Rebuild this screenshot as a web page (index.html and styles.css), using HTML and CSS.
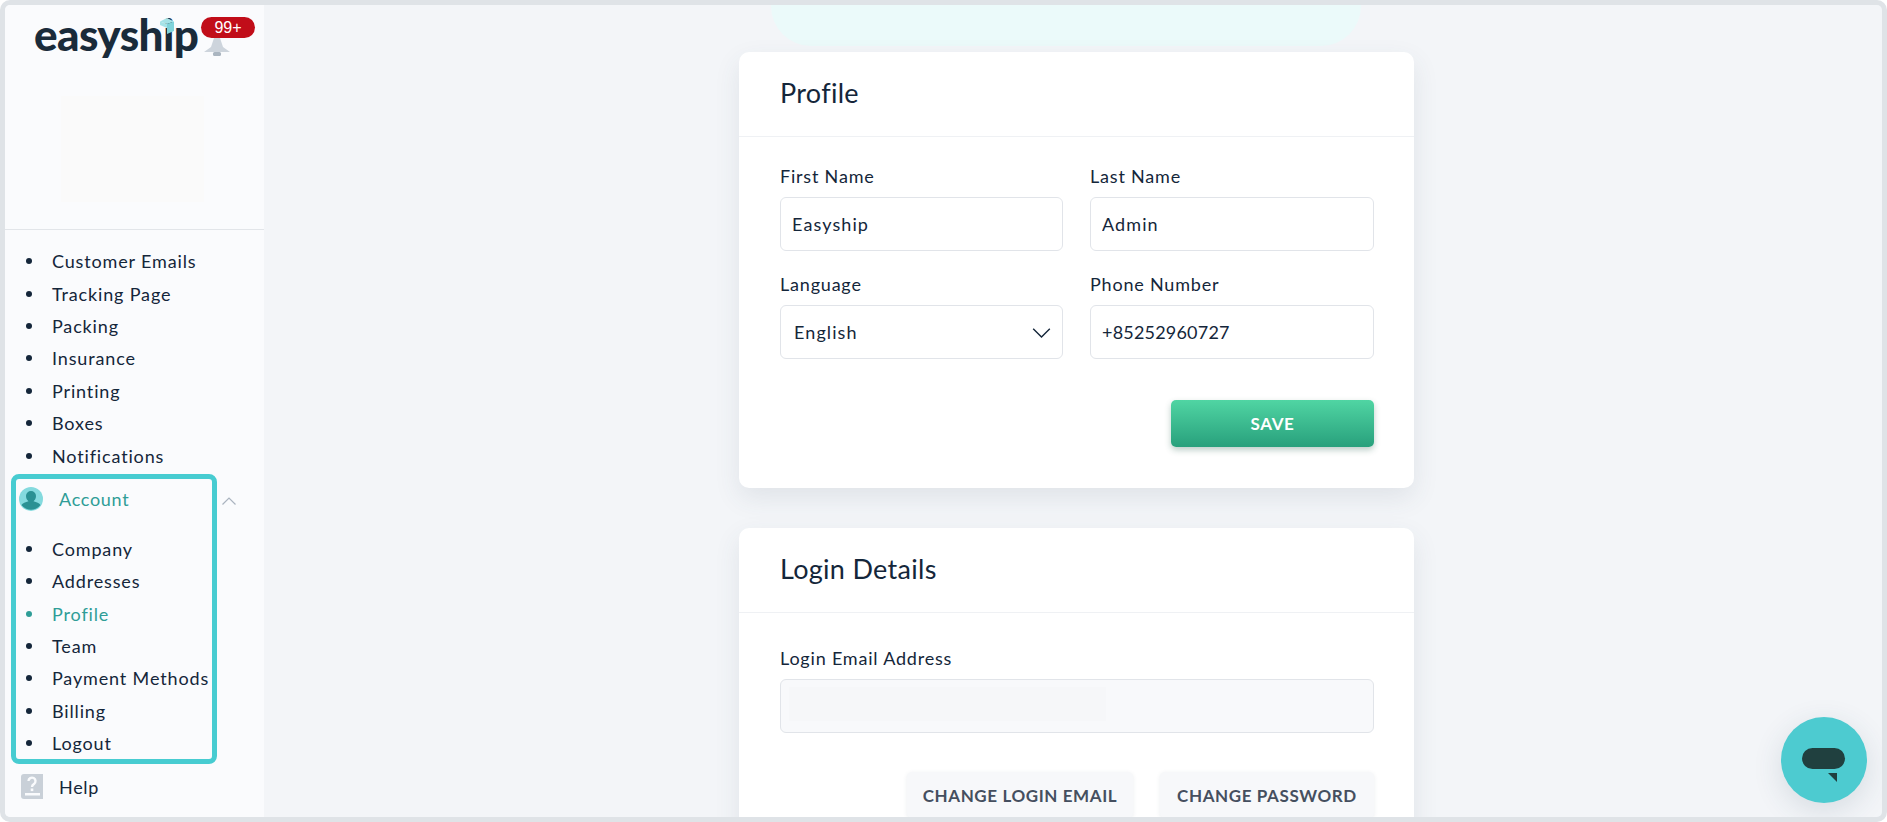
FILE: index.html
```html
<!DOCTYPE html>
<html lang="en">
<head>
<meta charset="utf-8">
<title>Easyship Profile</title>
<link rel="stylesheet" href="styles.css">
</head>
<body>
<div class="frame">
  <aside class="sidebar">
    <div class="brand">
      <span class="logo">easyship</span>
      <svg class="cube" viewBox="0 0 14 16"><path d="M0 3.5 7 0l7 3.5L7 6z" fill="#a5e2e6"/><path d="M7 6l7-2.500V13l-7 3z" fill="#7fd3da"/><path d="M0 3.500 7 6v4L0 7z" fill="#a5e2e6"/></svg>
      <svg class="bell" viewBox="0 0 28 18"><path d="M11 0h6l3 9 7 5H1l7-5z" fill="#cdd4dc"/><rect x="10" y="14" width="8" height="4" rx="1.500" fill="#aab5c0"/></svg>
      <span class="badge">99+</span>
    </div>
    <div class="avatar-slot"></div>
    <ul class="nav first">
      <li>Customer Emails</li>
      <li>Tracking Page</li>
      <li>Packing</li>
      <li>Insurance</li>
      <li>Printing</li>
      <li>Boxes</li>
      <li>Notifications</li>
    </ul>
    <div class="account-row">
      <section class="account-box">
        <div class="section-head active">
          <svg class="section-icon" viewBox="0 0 24 24"><circle cx="12" cy="12" r="12" fill="#84dade"/><path d="M12 4a5 5 0 0 1 5 5c0 2.500-1.200 4.300-2.500 5.200 3 .7 6 2.100 7 3.800a12 12 0 0 1-19 0c1-1.700 4-3.100 7-3.800C8.200 13.300 7 11.500 7 9a5 5 0 0 1 5-5z" fill="#2a9193"/></svg>
          <span>Account</span>
        </div>
        <ul class="nav sub">
          <li>Company</li>
          <li>Addresses</li>
          <li class="current">Profile</li>
          <li>Team</li>
          <li>Payment Methods</li>
          <li>Billing</li>
          <li>Logout</li>
        </ul>
      </section>
      <svg class="chevron-up" viewBox="0 0 14 8"><path d="M.5 7.500 7 1l6.500 6.500" fill="none" stroke="#aab4bf" stroke-width="1.200"/></svg>
    </div>
    <div class="section-head help">
      <svg class="section-icon help-icon" viewBox="0 0 22 25"><path d="M3 0h19v25H3a3 3 0 0 1-3-3V3a3 3 0 0 1 3-3z" fill="#c9d0d8"/><rect x="4" y="19" width="15" height="2.500" fill="#fafbfd"/><path d="M7.500 7a3.500 3.500 0 1 1 5.500 3c-1.200.8-2 1.300-2 3" fill="none" stroke="#fafbfd" stroke-width="2.400"/><rect x="9.700" y="14.500" width="2.600" height="2.600" fill="#fafbfd"/></svg>
      <span>Help</span>
    </div>
  </aside>

  <main class="main">
    <div class="banner"></div>
    <section class="card profile-card">
      <h2 class="card-title">Profile</h2>
      <div class="card-body">
        <div class="grid">
          <label class="field"><span class="label">First Name</span><input class="input" value="Easyship" readonly></label>
          <label class="field"><span class="label">Last Name</span><input class="input" value="Admin" readonly></label>
          <label class="field"><span class="label">Language</span>
            <span class="select-wrap">
              <select class="input select"><option>English</option></select>
              <svg class="chevron-down" viewBox="0 0 18 10"><path d="M.7.7 9 9 17.300.7" fill="none" stroke="#14263a" stroke-width="1.400"/></svg>
            </span>
          </label>
          <label class="field"><span class="label">Phone Number</span><input class="input phone" value="+85252960727" readonly></label>
        </div>
        <div class="actions save-row"><button class="btn-save">SAVE</button></div>
      </div>
    </section>
    <section class="card login-card">
      <h2 class="card-title">Login Details</h2>
      <div class="card-body">
        <div class="field"><span class="label">Login Email Address</span>
          <div class="input disabled"><div class="redacted"></div></div>
        </div>
        <div class="actions login-actions">
          <button class="btn-plain email-btn">CHANGE LOGIN EMAIL</button>
          <button class="btn-plain pass-btn">CHANGE PASSWORD</button>
        </div>
      </div>
    </section>
  </main>

  <button class="chat" aria-label="Chat">
    <svg viewBox="0 0 44 36" class="chat-icon"><rect x="0" y="0" width="43" height="21" rx="10.500" fill="#20403f"/><path d="M26 25h9v9z" fill="#20403f"/></svg>
  </button>
</div>
</body>
</html>
```
FILE: styles.css
```css
* { box-sizing: border-box; }
html, body { margin: 0; height: 100%; background: #fff; overflow: hidden; }
body { font-family: Lato, "Liberation Sans", sans-serif; color: #14263a; }

.frame {
  position: relative;
  display: flex;
  height: 822px;
  border: 5px solid #dfe3e7;
  border-radius: 10px;
  overflow: hidden;
  background: #f3f5f8;
}

/* Sidebar */
.sidebar { width: 259px; flex: none; background: #fafbfd; display: flex; flex-direction: column; }
.brand { position: relative; height: 91px; }
.logo {
  position: absolute; left: 29px; top: 3px;
  font: 900 44px/52px Lato, sans-serif;
  letter-spacing: -.6px;
  color: #1a2b3a;
}
.cube { position: absolute; left: 155px; top: 13px; width: 14px; height: 16px; }
.bell { position: absolute; left: 198px; top: 33px; width: 28px; height: 18px; }
.badge {
  position: absolute; left: 196px; top: 12px;
  width: 54px; height: 21px;
  border-radius: 11px;
  background: #c10d19;
  color: #fff;
  font: 400 16px/21px "Liberation Sans", sans-serif;
  text-align: center;
}
.avatar-slot { width: 143px; height: 106px; margin-left: 56px; margin-bottom: 27px; background: #fafafa; }
.nav { list-style: none; margin: 0; padding: 0; font-size: 18px; }
.nav li {
  display: flex; align-items: center; gap: 20px;
  height: 32.4px; margin-left: 21px;
  letter-spacing: .85px; white-space: nowrap;
}
.nav li::before { content: ""; width: 6px; height: 6px; flex: none; border-radius: 50%; background: #14263a; }
.first { border-top: 1px solid #e2e5e9; padding-top: 15px; }
.account-row { display: flex; align-items: flex-start; }
.account-box {
  width: 206px; height: 290px;
  margin: 2px 0 0 6px;
  border: 5px solid #47ccd1;
  border-radius: 8px;
}
.section-head { display: flex; align-items: center; height: 40px; gap: 16px; font-size: 18px; letter-spacing: .7px; }
.section-head.active { color: #2f9d97; padding-left: 3px; }
.section-icon { width: 24px; height: 24px; flex: none; }
.sub { padding-top: 14px; }
.sub .current { color: #2f9d97; }
.sub .current::before { background: #2f9d97; }
.sub li { margin-left: 10px; }
.chevron-up { width: 14px; height: 8px; margin: 25px 0 0 5px; }
.help { color: #14263a; padding-left: 16px; gap: 16px; height: 30px; margin-top: 8px; }
.help-icon { width: 22px; height: 25px; }

/* Main column */
.main { flex: 1; min-width: 0; overflow: hidden; padding-left: 475px; }
.banner { width: 590px; height: 41px; margin: 0 0 6px 32px; background: #ebfafa; border-radius: 0 0 40px 40px; }
.card { width: 675px; background: #fff; border-radius: 10px; box-shadow: 0 10px 26px rgba(60, 80, 100, .1); }
.profile-card { height: 436px; margin-bottom: 40px; }
.card-title {
  margin: 0; height: 85px; padding-left: 41px;
  border-bottom: 1px solid #eff1f4;
  font-weight: 400; font-size: 27px; line-height: 82px;
  letter-spacing: .3px;
  color: #14263a;
}
.card-body { padding: 0 40px 0 41px; }
.grid { display: grid; grid-template-columns: 283px 284px; column-gap: 27px; padding-top: 24px; }
.field { display: block; }
.grid .field { height: 108px; }
.label { display: block; height: 36px; font-size: 18px; line-height: 30px; letter-spacing: .8px; color: #14263a; }
.input {
  display: block; width: 100%; height: 54px;
  border: 1px solid #e1e4e9; border-radius: 6px;
  background: #fff;
  padding: 0 11px;
  font: 400 18px Lato, sans-serif;
  letter-spacing: 1.1px;
  color: #14263a;
  outline: none;
}
.phone { letter-spacing: .2px; }
.select-wrap { display: block; position: relative; }
.select { appearance: none; -webkit-appearance: none; padding-left: 13px; }
.chevron-down { position: absolute; right: 12px; top: 23px; width: 19px; height: 10px; pointer-events: none; }
.actions { display: flex; justify-content: flex-end; }
.save-row { padding-top: 23px; }
.btn-save {
  width: 203px; height: 47px;
  border: 0; border-radius: 5px;
  background: linear-gradient(#50d5a3, #28a07c);
  box-shadow: 0 3px 6px rgba(30, 90, 70, .3);
  color: #fff;
  font: 700 17px/44px Lato, sans-serif;
  letter-spacing: .6px;
}
.login-card { height: 400px; }
.login-card .card-body { padding-top: 30px; }
.disabled { background: #f8f9fb; padding: 7px 8px 0 8px; }
.redacted { width: 317px; height: 34px; background: #f6f7f9; }
.login-actions { gap: 27px; padding-top: 39px; }
.btn-plain {
  height: 46px; border: 0; border-radius: 5px;
  background: #f7f8fa;
  box-shadow: 0 1px 4px rgba(60, 80, 100, .1);
  color: #454f5f;
  font: 700 17px Lato, sans-serif;
  letter-spacing: .6px;
}
.email-btn { width: 226px; }
.pass-btn { width: 214px; }

/* Chat launcher */
.chat {
  position: absolute; left: 1776px; top: 712px;
  width: 86px; height: 86px;
  border: 0; border-radius: 50%; padding: 0;
  background: #4dcbd0;
  box-shadow: 0 8px 30px rgba(40, 70, 90, .14);
  display: flex; align-items: center; justify-content: center;
}
.chat-icon { width: 44px; height: 36px; margin-top: 12px; margin-left: -1px; }
```
